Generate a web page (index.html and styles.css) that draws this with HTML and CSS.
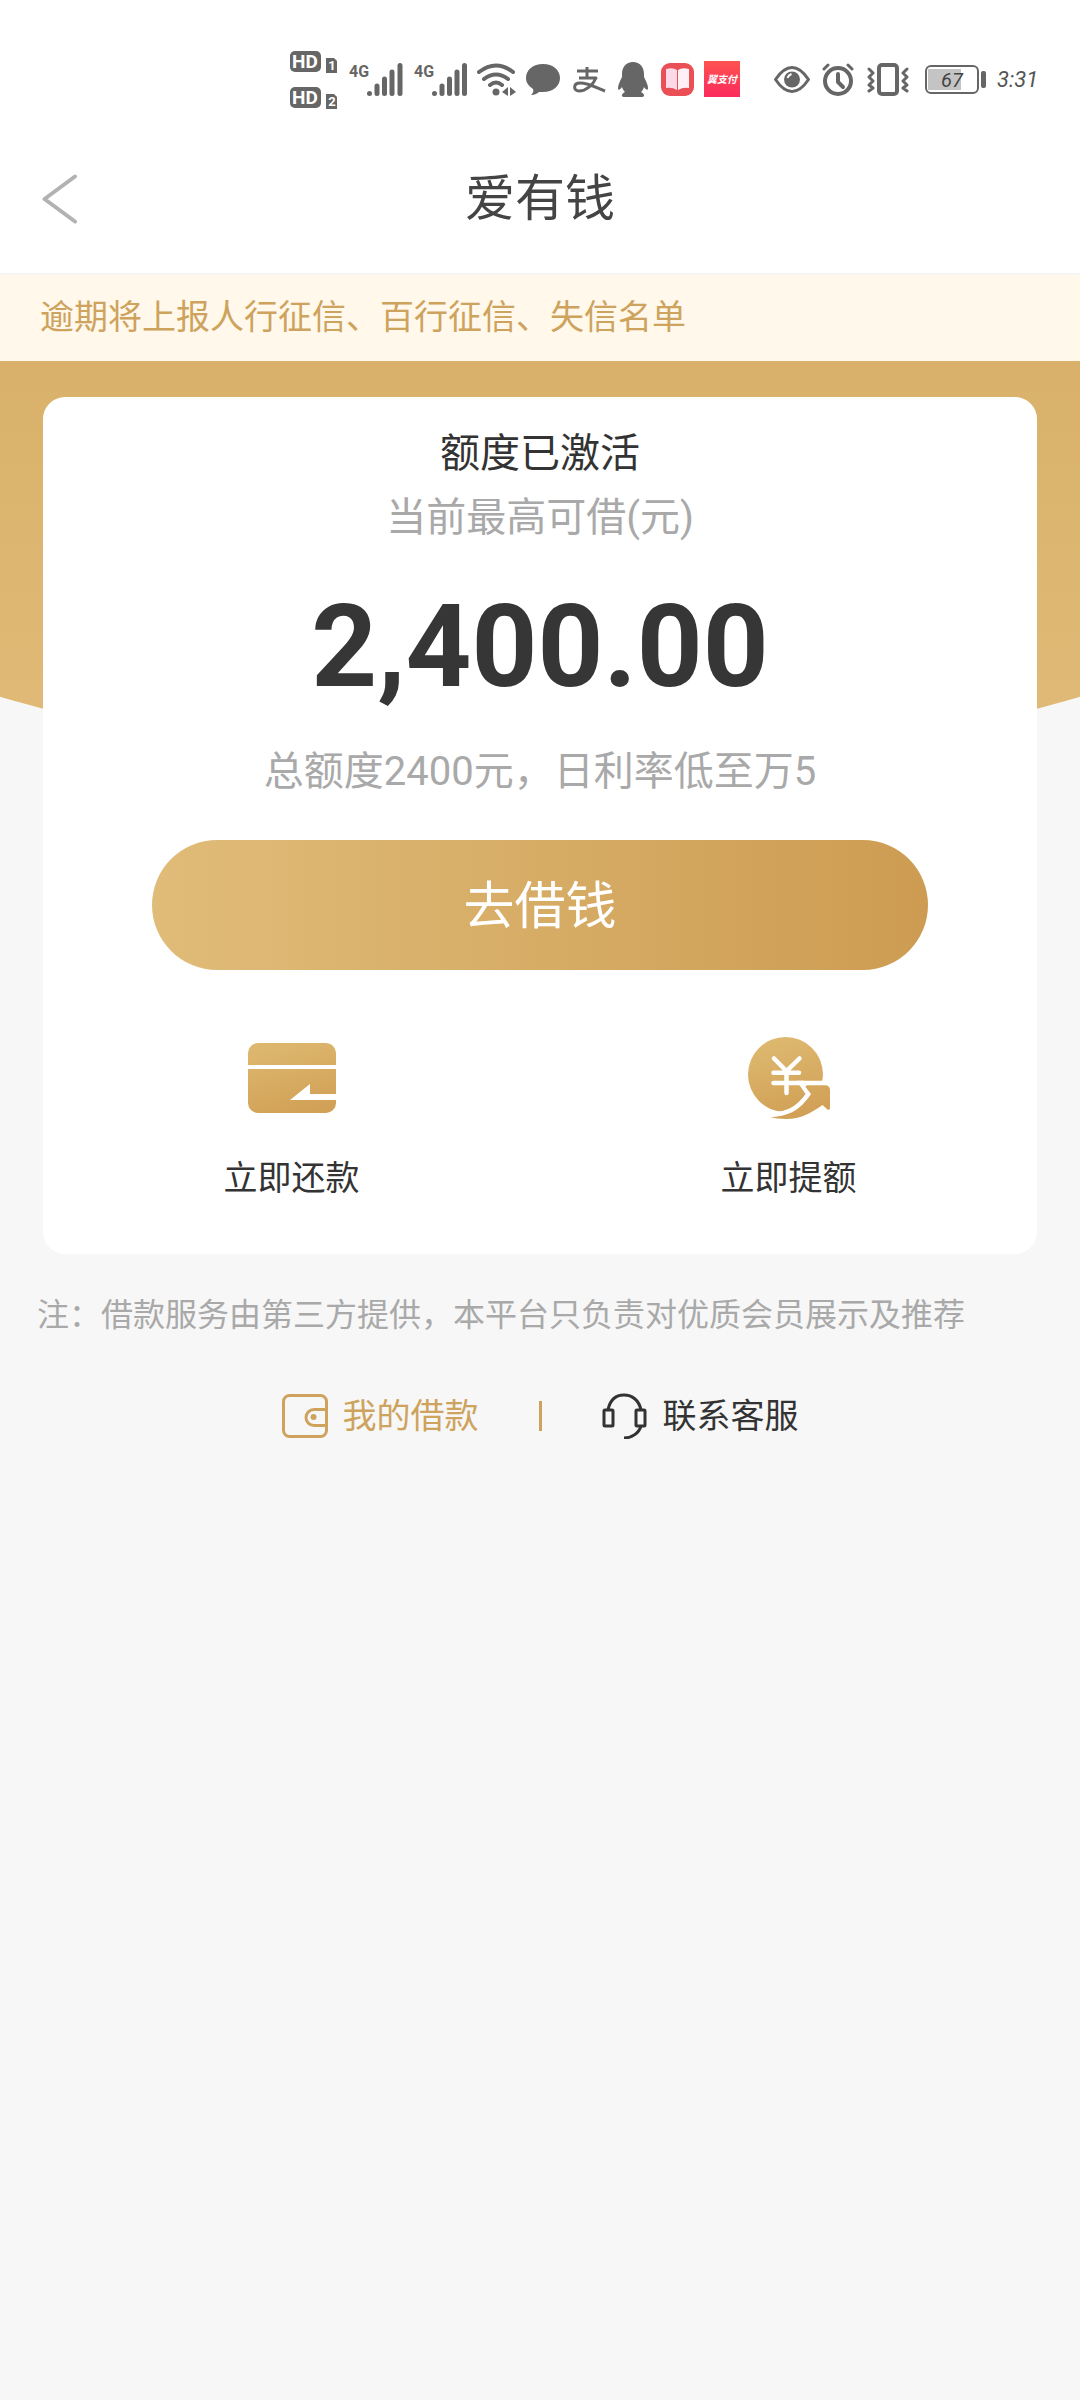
FILE: index.html
```html
<!DOCTYPE html>
<html lang="zh-CN">
<head>
<meta charset="utf-8">
<meta name="viewport" content="width=device-width, initial-scale=1">
<title>爱有钱</title>
<link rel="stylesheet" href="styles.css">
</head>
<body>
<header class="header">
  <div class="status">
    <div class="status-group">
      <svg width="49" height="60" viewBox="0 0 49 60">
        <rect x="0" y="1" width="31" height="21" rx="5"/>
        <text class="hd" x="15" y="18" text-anchor="middle">HD</text>
        <path d="M36 8h8l3 3v12h-11z"/>
        <text class="sim" x="42" y="20" text-anchor="middle">1</text>
        <rect x="0" y="37" width="31" height="21" rx="5"/>
        <text class="hd" x="15" y="54" text-anchor="middle">HD</text>
        <path d="M36 44h8l3 3v12h-11z"/>
        <text class="sim" x="42" y="56" text-anchor="middle">2</text>
      </svg>
      <svg width="55" height="60" viewBox="0 0 55 60">
        <text class="net" x="0" y="27">4G</text>
        <path class="bars" d="M20.500 43.500v0M28 36v7.500M35.500 29v14.500M43 22v21.500M51 15.500v28"/>
      </svg>
      <svg width="53" height="60" viewBox="0 0 53 60">
        <text class="net" x="0" y="27">4G</text>
        <path class="bars" d="M20.500 43.500v0M28 36v7.500M35.500 29v14.500M43 22v21.500M50.500 15.500v28"/>
      </svg>
      <svg width="39" height="60" viewBox="0 0 39 60">
        <path class="line" stroke-width="4" d="M2 22q17-13 34 0M7 29q12-9 24 0M13 35q6-5 12 0"/>
        <circle cx="19" cy="42" r="3.500"/>
        <path d="M25 42l6-5v9zM33 37l6 5-6 4z"/>
      </svg>
      <svg width="36" height="60" viewBox="0 0 36 60">
        <path d="M17 14c10 0 17 6 17 14s-7 14-17 14c-2 0-3 0-4 0-2 2-5 3-8 3 2-2 3-4 2-6-4-3-7-6-7-11 0-8 7-14 17-14z"/>
      </svg>
      <svg width="36" height="60" viewBox="0 0 36 60">
        <path class="line cap-flat" stroke-width="3" d="M5 21h21M15 17v11M7 28h17c-3 7-10 13-17 13-6 0-6-8 1-8 8 0 15 4 25 8"/>
      </svg>
      <svg width="33" height="60" viewBox="0 0 33 60">
        <path d="M15 12c7 0 11 5 11 12v3c2 4 4 8 4 11 0 3-2 2-4-1-1 3-2 4-3 5 4 2 4 5 1 5h-7c-2 0-2 0-4 0H6c-3 0-3-3 1-5-1-1-2-2-3-5-2 3-4 4-4 1 0-3 2-7 4-11v-3c0-7 4-12 11-12z"/>
      </svg>
      <svg width="33" height="60" viewBox="0 0 33 60">
        <rect x="0" y="13" width="33" height="33" rx="9" fill="#e94f55"/>
        <path fill="#fbd9e6" d="M5 19q7-2 11 1v20q-5-3-11-2z"/>
        <path fill="#fff0f5" d="M28 19q-7-2-11 1v20q5-3 11-2z"/>
      </svg>
      <svg width="36" height="60" viewBox="0 0 36 60">
        <defs><linearGradient id="pay" x2="0" y2="1"><stop stop-color="#ff5350"/><stop offset="1" stop-color="#fa2b5d"/></linearGradient></defs>
        <rect x="0" y="11" width="36" height="36" fill="url(#pay)"/>
        <text class="pay" x="18" y="33" text-anchor="middle">翼支付</text>
      </svg>
    </div>
    <div class="status-group">
      <svg width="38" height="60" viewBox="0 0 38 60">
        <path class="line" stroke-width="3" d="M1.500 29.500q8-12 16.500-12t16.500 12q-8 12-16.500 12t-16.500-12z"/>
        <circle cx="18" cy="29.500" r="8"/>
        <path fill="none" stroke="#fff" stroke-width="2" d="M13.500 28q1-3 4-4"/>
      </svg>
      <svg width="35" height="60" viewBox="0 0 35 60">
        <circle class="line" stroke-width="4" cx="16" cy="31" r="13"/>
        <path class="line" stroke-width="4" d="M16 24v8l5 5"/>
        <path class="line" stroke-width="3" d="M2 19l4-4M30 19l-4-4"/>
      </svg>
      <svg width="48" height="60" viewBox="0 0 48 60">
        <rect class="line" stroke-width="4" x="12" y="15" width="18" height="29" rx="3"/>
        <path class="line" stroke-width="3" d="M2 19l4 4-4 4 4 4-4 4 4 3-4 3M40 19l-4 4 4 4-4 4 4 4-4 3 4 3"/>
      </svg>
      <svg width="62" height="60" viewBox="0 0 62 60">
        <rect class="line" stroke-width="2" x="1" y="16" width="52" height="27" rx="5"/>
        <rect x="3" y="19" width="33" height="21" fill="#c4c4c4"/>
        <text class="level" x="27" y="37" text-anchor="middle">67</text>
        <rect x="56" y="21" width="5" height="17" rx="2"/>
      </svg>
      <time class="clock">3:31</time>
    </div>
  </div>
  <nav class="nav">
    <button class="back" type="button" aria-label="返回">
      <svg width="36" height="50" viewBox="0 0 36 50"><path d="M33 2.500L2.500 25L33 47.500"/></svg>
    </button>
    <h1 class="title">爱有钱</h1>
  </nav>
</header>

<p class="notice">逾期将上报人行征信、百行征信、失信名单</p>

<main class="main">
  <section class="card">
    <h2 class="state">额度已激活</h2>
    <p class="muted">当前最高可借(元)</p>
    <p class="amount">2,400.00</p>
    <p class="muted">总额度2400元，日利率低至万5</p>
    <button class="borrow" type="button">去借钱</button>
    <div class="actions">
      <a class="action" href="#repay">
        <svg width="88" height="88" viewBox="0 0 88 88">
          <defs><linearGradient id="gold" gradientUnits="userSpaceOnUse" x1="30" y1="5" x2="50" y2="80"><stop stop-color="#deb86f"/><stop offset="1" stop-color="#d1a157"/></linearGradient></defs>
          <path fill="url(#gold)" d="M10 9h68a10 10 0 0 1 10 10v12H0V19A10 10 0 0 1 10 9zM0 35h88v25H62V50L42 66h46v3a10 10 0 0 1-10 10H10A10 10 0 0 1 0 69z"/>
        </svg>
        <span>立即还款</span>
      </a>
      <a class="action" href="#raise">
        <svg width="88" height="88" viewBox="0 0 88 88">
          <circle cx="40.500" cy="40.500" r="37.500" fill="url(#gold)"/>
          <path fill="none" stroke="#fff" stroke-width="4.500" stroke-linecap="round" d="M29 24.500L41.500 37L54.500 24.500M41.500 37V59M28.500 38.700h25.500M28.500 49h30"/>
          <path fill="#fff" stroke="#fff" stroke-width="9" d="M60 51.300H81Q85 51.300 85 56V75L83 76L77.500 71C66 79 56 85 41 85Q32 85 25 83.300C46 82 56 75 66 60z"/>
          <path fill="url(#gold)" d="M61.500 51.300H80Q85 51.300 85 56V75L83 76L77.500 71C66 79 56 85 41 85Q32 85 25 83.300C46 82 56 75 66 60L60.500 53z"/>
        </svg>
        <span>立即提额</span>
      </a>
    </div>
  </section>
  <p class="note">注：借款服务由第三方提供，本平台只负责对优质会员展示及推荐</p>
  <div class="links">
    <a class="link link-gold" href="#loans">
      <svg width="46" height="46" viewBox="0 0 46 46">
        <rect x="1.500" y="2.500" width="43" height="41" rx="6"/>
        <path d="M44 16.500H32a8 8 0 0 0 0 16h12"/>
        <circle class="dot" cx="31.500" cy="24" r="3"/>
      </svg>
      <span>我的借款</span>
    </a>
    <span class="divider"></span>
    <a class="link" href="#service">
      <svg width="46" height="46" viewBox="0 0 46 46">
        <path d="M6 17C8 7 14 2 22 2s15 5 17 15M39 33c-2 7-9 12-17 12"/>
        <rect x="2" y="17" width="9" height="16" rx="1"/>
        <rect x="34" y="17" width="9" height="16" rx="1"/>
      </svg>
      <span>联系客服</span>
    </a>
  </div>
</main>
</body>
</html>
```
FILE: styles.css
```css
* {
  box-sizing: border-box;
}

body {
  margin: 0;
  min-height: 100vh;
  background: #f7f7f7;
  color: #333;
  font-family: Roboto, "Noto Sans CJK SC", sans-serif;
}

h1, h2, p {
  margin: 0;
  font-weight: 400;
}

a {
  color: inherit;
  text-decoration: none;
}

button {
  border: 0;
  padding: 0;
  font: inherit;
}

svg {
  display: block;
  flex: none;
}

.header {
  background: #fff;
  border-bottom: 2px solid #f5f5f5;
}

.status {
  display: flex;
  justify-content: flex-end;
  gap: 34px;
  padding: 50px 43px 14px;
}

.status-group {
  display: flex;
  align-items: center;
  gap: 10px;
}

.status svg {
  fill: #666;
}

.status .line,
.status .bars {
  fill: none;
  stroke: #666;
  stroke-linecap: round;
  stroke-linejoin: round;
}

.status .cap-flat {
  stroke-linecap: butt;
}

.status .bars {
  stroke-width: 5px;
}

.status text {
  font-weight: 700;
}

.status .hd {
  fill: #fff;
  font-size: 19px;
}

.status .sim {
  fill: #fff;
  font-size: 13px;
}

.status .net {
  font-size: 16px;
}

.status .pay {
  fill: #fff;
  font-size: 10px;
  font-style: italic;
}

.status .level {
  fill: #444;
  font-size: 20px;
  font-style: italic;
  font-weight: 400;
}

.clock {
  width: 40px;
  color: #555;
  font-size: 22px;
  font-style: italic;
  line-height: 60px;
  white-space: nowrap;
}

.nav {
  display: grid;
  grid-template-columns: 78px 1fr 78px;
  align-items: center;
  height: 149px;
}

.back {
  display: flex;
  justify-content: flex-end;
  background: none;
}

.back svg {
  fill: none;
  stroke: #b2b2b2;
  stroke-width: 4px;
  stroke-linecap: round;
  stroke-linejoin: round;
}

.title {
  color: #444;
  font-size: 50px;
  line-height: 60px;
  text-align: center;
}

.notice {
  padding: 17px 40px 19px;
  background: #fff8eb;
  color: #cda35d;
  font-size: 34px;
  line-height: 50px;
}

.main {
  position: relative;
  padding: 36px 43px;
}

.main::before {
  content: "";
  position: absolute;
  inset: 0 0 auto;
  height: 408px;
  background: linear-gradient(#d9b16a, #dfb975 80%);
  clip-path: ellipse(88% 408px at 50% 0);
}

.card {
  position: relative;
  display: flex;
  flex-direction: column;
  align-items: center;
  padding: 25px 0 51px;
  border-radius: 22px;
  background: #fff;
}

.state,
.muted {
  font-size: 40px;
  line-height: 64px;
}

.muted {
  color: #a9a9a9;
}

.amount {
  margin: 27px 0 23px;
  color: #363636;
  font-size: 115px;
  font-weight: 700;
  line-height: 140px;
}

.borrow {
  width: 78%;
  height: 130px;
  margin-top: 36px;
  padding-bottom: 6px;
  border-radius: 65px;
  background: linear-gradient(90deg, #e0bc79, #cd9c52);
  color: #fff;
  font-size: 51px;
}

.actions {
  display: grid;
  grid-template-columns: 1fr 1fr;
  align-self: stretch;
  margin-top: 64px;
}

.action {
  display: flex;
  flex-direction: column;
  align-items: center;
  gap: 31px;
  font-size: 34px;
  line-height: 50px;
}

.note {
  margin: 37px -6px 0;
  color: #a9a9a9;
  font-size: 32px;
  line-height: 48px;
}

.links {
  display: flex;
  justify-content: center;
  align-items: center;
  gap: 60px;
  margin-top: 47px;
}

.link {
  display: flex;
  align-items: center;
  gap: 15px;
  font-size: 34px;
  line-height: 60px;
}

.link svg {
  fill: none;
  stroke: currentColor;
  stroke-width: 3px;
}

.link .dot {
  fill: currentColor;
  stroke: none;
}

.link-gold {
  color: #cda35d;
}

.divider {
  width: 3px;
  height: 30px;
  background: #cda35d;
}
```
